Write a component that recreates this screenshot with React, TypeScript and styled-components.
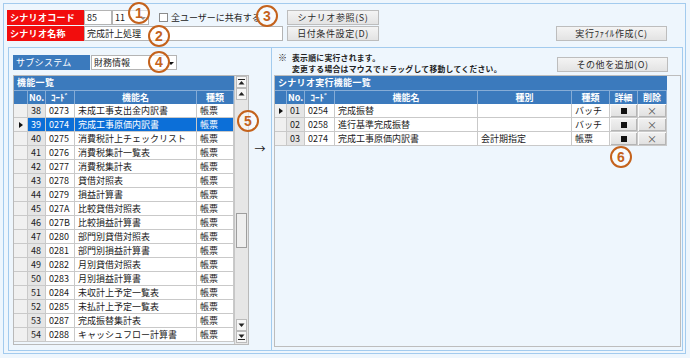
import React from "react";
import styled, { createGlobalStyle } from "styled-components";

const GlobalStyle = createGlobalStyle`
  html, body { margin: 0; padding: 0; }
  body {
    font-family: "Noto Sans CJK JP", "Noto Sans", sans-serif;
    font-size: 9px;
    color: #1a1a1a;
  }
`;

const BLUE = "#3b7abd";
const LINE = "#a3cbee";

const Page = styled.div`
  position: relative;
  width: 690px;
  height: 358px;
  box-sizing: border-box;
  padding: 3px 4px 4px 3px;
  background: #eef6fd;
`;

const Frame = styled.div`
  height: 100%;
  box-sizing: border-box;
  border: 1px solid ${LINE};
  display: flex;
  flex-direction: column;
`;

const TopGrid = styled.div`
  display: grid;
  grid-template-columns: 77px 203px 92px 1fr 111px;
  grid-template-rows: 15px 15px;
  row-gap: 1px;
  padding: 6px 18px 0 3px;
`;

const RedLabel = styled.div`
  background: #f20d0d;
  color: #fff;
  font-weight: bold;
  padding-left: 3px;
  line-height: 15px;
  letter-spacing: 0.3px;
`;

const InputRow = styled.div`
  display: flex;
  align-items: stretch;
`;

const TextBox = styled.div<{ $w: number }>`
  width: ${p => p.$w}px;
  box-sizing: border-box;
  border: 1px solid #b4b4b4;
  background: #fff;
  display: flex;
  align-items: center;
  padding: 0 1px 0 2px;
  white-space: nowrap;
`;

const BoxText = styled.span`
  flex: 1;
`;

const DropArrow = styled.span`
  width: 0;
  height: 0;
  border-left: 3px solid transparent;
  border-right: 3px solid transparent;
  border-top: 3px solid #111;
  margin: 1px 1px 0 0;
`;

const CheckLabel = styled.label`
  display: flex;
  align-items: center;
  gap: 3px;
  margin-left: 10px;
  color: #222;
`;

const CheckBox = styled.span`
  width: 7px;
  height: 7px;
  border: 1px solid #8c8c8c;
  background: #fff;
`;

const Button = styled.div`
  height: 15px;
  box-sizing: border-box;
  border: 1px solid #bdbdbd;
  background: linear-gradient(#f4f4f4, #e3e3e3);
  display: flex;
  align-items: center;
  justify-content: center;
  color: #2a2a2a;
  letter-spacing: 0.6px;
`;

const MainPanel = styled.div`
  flex: 1;
  margin: 6px 2px 2px 4px;
  border: 1px solid ${LINE};
  display: flex;
`;

const LeftPane = styled.div`
  width: 262px;
  box-sizing: border-box;
  padding: 7px 0 0 4px;
  display: flex;
  flex-direction: column;
`;

const SubsystemRow = styled.div`
  display: flex;
  gap: 1px;
  height: 15px;
`;

const BlueLabel = styled.div`
  width: 77px;
  background: ${BLUE};
  color: #fff;
  padding-left: 3px;
  line-height: 15px;
  box-sizing: border-box;
  letter-spacing: 0.3px;
`;

const TableRow = styled.div`
  display: flex;
  margin-top: 5px;
  height: 270px;
`;

const TableBox = styled.div<{ $w: number }>`
  width: ${p => p.$w}px;
  box-sizing: border-box;
  border: 1px solid #b9b9b9;
  display: flex;
  align-items: flex-start;
`;

const ArrowCol = styled.div`
  flex: 1;
  text-align: center;
  padding-top: 68px;
  font-size: 11px;
  line-height: 11px;
`;

const RightPane = styled.div`
  flex: 1;
  border-left: 1px solid ${LINE};
  padding: 0 1px 3px 2px;
  display: flex;
  flex-direction: column;
`;

const NoteRow = styled.div`
  height: 27px;
  display: flex;
  justify-content: space-between;
  align-items: flex-start;
  padding: 4px 13px 0 4px;
  box-sizing: border-box;
`;

const Note = styled.div`
  display: grid;
  grid-template-columns: 14px auto;
  grid-auto-rows: 11px;
  font-size: 7.8px;
  line-height: 11px;
  letter-spacing: 0.3px;
  font-weight: bold;
  color: #222;
`;

const NoteMark = styled.span`
  font-size: 9px;
  font-weight: normal;
`;

const NoteButton = styled(Button)`
  width: 111px;
  margin-top: 5px;
`;

const RightBox = styled.div`
  flex: 1;
  border: 1px solid #bdbdbd;
`;

const Grid = styled.div<{ $cols: string; $w: number }>`
  width: ${p => p.$w}px;
  display: grid;
  grid-template-columns: ${p => p.$cols};
  grid-auto-rows: 14px;
  background: #fff;
`;

const TitleBar = styled.div`
  grid-column: 1 / -1;
  background: ${BLUE};
  color: #fff;
  font-weight: bold;
  padding-left: 3px;
  line-height: 14px;
  letter-spacing: 0.3px;
`;

const HeadCell = styled.div`
  background: ${BLUE};
  color: #fff;
  font-weight: bold;
  text-align: center;
  line-height: 13px;
  border-top: 1px solid #86acd6;
  border-right: 1px solid #86acd6;
  white-space: nowrap;
  overflow: hidden;
`;

type Kind = "mark" | "num" | "text" | "btn";

const cellBg = (kind: Kind, sel?: boolean) => {
  if (sel && kind !== "mark") return "#0c6fd8";
  if (kind === "mark") return "#f0f0f0";
  if (kind === "num") return "#e5e5e5";
  if (kind === "btn") return "linear-gradient(#f2f2f2, #e0e0e0)";
  return "#fff";
};

const Cell = styled.div<{ $kind: Kind; $sel?: boolean }>`
  box-sizing: border-box;
  border-right: 1px solid #c9c9c9;
  border-bottom: 1px solid #c9c9c9;
  line-height: 13px;
  padding: 0 3px;
  white-space: nowrap;
  overflow: hidden;
  background: ${p => cellBg(p.$kind, p.$sel)};
  color: ${p => (p.$sel && p.$kind !== "mark" ? "#fff" : "#1a1a1a")};
  display: flex;
  align-items: center;
  justify-content: ${p => (p.$kind === "mark" || p.$kind === "btn" ? "center" : "flex-start")};
  box-shadow: ${p => (p.$kind === "btn" ? "inset 1px 1px #fafafa, inset -1px -1px #b5b5b5" : "none")};
`;

const Pointer = styled.span`
  width: 0;
  height: 0;
  border-top: 3px solid transparent;
  border-bottom: 3px solid transparent;
  border-left: 4px solid #111;
`;

const Square = styled.span`
  width: 6px;
  height: 6px;
  background: #111;
`;

const Cross = styled.span`
  color: #555;
  font-size: 10px;
`;

const ScrollBar = styled.div`
  width: 14px;
  align-self: stretch;
  box-sizing: border-box;
  border-left: 1px solid #c6c6c6;
  background: #e6e6e6;
  padding: 0 1px 1px;
  display: flex;
  flex-direction: column;
`;

const ScrollBtn = styled.div`
  height: 12px;
  box-sizing: border-box;
  border: 1px solid #bbb;
  background: #f6f6f6;
  display: flex;
  align-items: center;
  justify-content: center;
`;

const Track = styled.div<{ $offset: number }>`
  flex: 1;
  padding-top: ${p => p.$offset}px;
`;

const Thumb = styled.div`
  height: 35px;
  box-sizing: border-box;
  border: 1px solid #9e9e9e;
  background: #efefef;
`;

const Badge = styled.div<{ $x: number; $y: number }>`
  position: absolute;
  left: ${p => p.$x}px;
  top: ${p => p.$y}px;
  width: 22px;
  height: 22px;
  box-sizing: border-box;
  border: 2px solid #c4621c;
  border-radius: 50%;
  background: rgba(255, 255, 255, 0.55);
  color: #c4621c;
  font-family: "Liberation Sans", "DejaVu Sans", sans-serif;
  font-weight: bold;
  font-size: 14px;
  line-height: 18px;
  text-align: center;
`;

const ScrollIcon = ({ dir, bar }: { dir: "up" | "down"; bar: boolean }) => (
  <svg width="7" height="6" viewBox="0 0 7 6">
    {dir === "up" ? (
      <>
        {bar && <rect x="0" y="0" width="7" height="1" fill="#222" />}
        <path d={bar ? "M3.5 2 L6.5 5.5 L0.5 5.5 Z" : "M3.5 1 L6.5 4.5 L0.5 4.5 Z"} fill="#222" />
      </>
    ) : (
      <>
        <path d={bar ? "M0.5 0.5 L6.5 0.5 L3.5 4 Z" : "M0.5 1.5 L6.5 1.5 L3.5 5 Z"} fill="#222" />
        {bar && <rect x="0" y="5" width="7" height="1" fill="#222" />}
      </>
    )}
  </svg>
);

const functions = [
  ["38", "0273", "未成工事支出金内訳書"],
  ["39", "0274", "完成工事原価内訳書"],
  ["40", "0275", "消費税計上チェックリスト"],
  ["41", "0276", "消費税集計一覧表"],
  ["42", "0277", "消費税集計表"],
  ["43", "0278", "貸借対照表"],
  ["44", "0279", "損益計算書"],
  ["45", "027A", "比較貸借対照表"],
  ["46", "027B", "比較損益計算書"],
  ["47", "0280", "部門別貸借対照表"],
  ["48", "0281", "部門別損益計算書"],
  ["49", "0282", "月別貸借対照表"],
  ["50", "0283", "月別損益計算書"],
  ["51", "0284", "未収計上予定一覧表"],
  ["52", "0285", "未払計上予定一覧表"],
  ["53", "0287", "完成振替集計表"],
  ["54", "0288", "キャッシュフロー計算書"],
];

const scenario = [
  ["01", "0254", "完成振替", "", "バッチ"],
  ["02", "0258", "進行基準完成振替", "", "バッチ"],
  ["03", "0274", "完成工事原価内訳書", "会計期指定", "帳票"],
];

const App: React.FC = () => {
  return (
    <Page>
      <GlobalStyle />
      <Frame>
        <TopGrid>
          <RedLabel>シナリオコード</RedLabel>
          <InputRow>
            <TextBox $w={28}>85</TextBox>
            <TextBox $w={37}>
              <BoxText>11</BoxText>
              <DropArrow />
            </TextBox>
            <CheckLabel>
              <CheckBox />
              全ユーザーに共有する
            </CheckLabel>
          </InputRow>
          <Button>シナリオ参照(S)</Button>
          <div />
          <div />
          <RedLabel>シナリオ名称</RedLabel>
          <InputRow>
            <TextBox $w={199}>完成計上処理</TextBox>
          </InputRow>
          <Button>日付条件設定(D)</Button>
          <div />
          <Button>実行ﾌｧｲﾙ作成(C)</Button>
        </TopGrid>

        <MainPanel>
          <LeftPane>
            <SubsystemRow>
              <BlueLabel>サブシステム</BlueLabel>
              <TextBox $w={86}>
                <BoxText>財務情報</BoxText>
                <DropArrow />
              </TextBox>
            </SubsystemRow>
            <TableRow>
              <TableBox $w={236}>
                <Grid $cols="14px 18px 29px 122px 37px" $w={220}>
                  <TitleBar>機能一覧</TitleBar>
                  <HeadCell />
                  <HeadCell>No.</HeadCell>
                  <HeadCell>ｺｰﾄﾞ</HeadCell>
                  <HeadCell>機能名</HeadCell>
                  <HeadCell>種類</HeadCell>
                  {functions.map(([no, code, name]) => {
                    const sel = no === "39";
                    return (
                      <React.Fragment key={no}>
                        <Cell $kind="mark">{sel && <Pointer />}</Cell>
                        <Cell $kind="num" $sel={sel}>{no}</Cell>
                        <Cell $kind="text" $sel={sel}>{code}</Cell>
                        <Cell $kind="text" $sel={sel}>{name}</Cell>
                        <Cell $kind="text" $sel={sel}>帳票</Cell>
                      </React.Fragment>
                    );
                  })}
                </Grid>
                <ScrollBar>
                  <ScrollBtn><ScrollIcon dir="up" bar /></ScrollBtn>
                  <ScrollBtn><ScrollIcon dir="up" bar={false} /></ScrollBtn>
                  <Track $offset={113}><Thumb /></Track>
                  <ScrollBtn><ScrollIcon dir="down" bar={false} /></ScrollBtn>
                  <ScrollBtn><ScrollIcon dir="down" bar /></ScrollBtn>
                </ScrollBar>
              </TableBox>
              <ArrowCol>→</ArrowCol>
            </TableRow>
          </LeftPane>

          <RightPane>
            <NoteRow>
              <Note>
                <NoteMark>※</NoteMark>
                <span>表示順に実行されます。</span>
                <span />
                <span>変更する場合はマウスでドラッグして移動してください。</span>
              </Note>
              <NoteButton>その他を追加(O)</NoteButton>
            </NoteRow>
            <RightBox>
              <Grid $cols="12px 18px 30px 143px 94px 38px 28px 29px" $w={392}>
                <TitleBar>シナリオ実行機能一覧</TitleBar>
                <HeadCell />
                <HeadCell>No.</HeadCell>
                <HeadCell>ｺｰﾄﾞ</HeadCell>
                <HeadCell>機能名</HeadCell>
                <HeadCell>種別</HeadCell>
                <HeadCell>種類</HeadCell>
                <HeadCell>詳細</HeadCell>
                <HeadCell>削除</HeadCell>
                {scenario.map(([no, code, name, cond, kind]) => (
                  <React.Fragment key={no}>
                    <Cell $kind="mark">{no === "01" && <Pointer />}</Cell>
                    <Cell $kind="num">{no}</Cell>
                    <Cell $kind="text">{code}</Cell>
                    <Cell $kind="text">{name}</Cell>
                    <Cell $kind="text">{cond}</Cell>
                    <Cell $kind="text">{kind}</Cell>
                    <Cell $kind="btn"><Square /></Cell>
                    <Cell $kind="btn"><Cross>×</Cross></Cell>
                  </React.Fragment>
                ))}
              </Grid>
            </RightBox>
          </RightPane>
        </MainPanel>
      </Frame>

      <Badge $x={128} $y={2}>1</Badge>
      <Badge $x={148} $y={25}>2</Badge>
      <Badge $x={256} $y={5}>3</Badge>
      <Badge $x={148} $y={51}>4</Badge>
      <Badge $x={237} $y={110}>5</Badge>
      <Badge $x={610} $y={146}>6</Badge>
    </Page>
  );
};

export default App;
